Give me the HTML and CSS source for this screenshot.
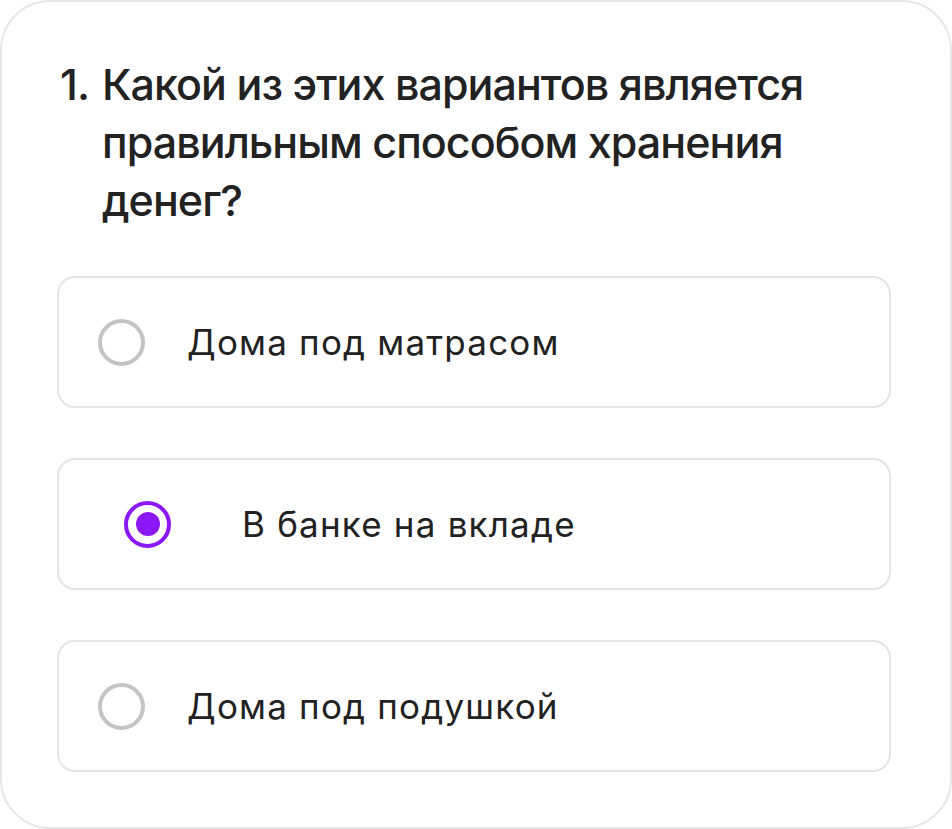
FILE: index.html
```html
<!DOCTYPE html>
<html lang="ru">
<head>
<meta charset="utf-8">
<title>Вопрос</title>
<link rel="stylesheet" href="styles.css">
</head>
<body>
<div class="card">
  <h1 class="question"><span class="num">1.</span><span class="qtext">Какой из этих вариантов является правильным способом хранения денег?</span></h1>
  <div class="options">
    <label class="option">
      <span class="radio"></span>
      <span class="label">Дома под матрасом</span>
    </label>
    <label class="option option--selected">
      <span class="radio radio--on"><span class="dot"></span></span>
      <span class="label">В банке на вкладе</span>
    </label>
    <label class="option">
      <span class="radio"></span>
      <span class="label">Дома под подушкой</span>
    </label>
  </div>
</div>
</body>
</html>
```
FILE: styles.css
```css
* { box-sizing: border-box; }
html, body { margin: 0; padding: 0; background: #fff; }
body {
  font-family: Inter, "Noto Sans", sans-serif;
  color: #222;
}
.card {
  width: 952px;
  height: 829px;
  border: 2px solid #e6e6e6;
  border-radius: 50px;
  padding: 53px 59px 0 55px;
  background: #fff;
}
.question {
  margin: 0 0 47px 0;
  display: grid;
  grid-template-columns: 45px 1fr;
  font-size: 43px;
  line-height: 58px;
  font-weight: 500;
  color: #222;
  letter-spacing: -0.95px;
}
.num { padding-left: 3px; }
.options {
  display: flex;
  flex-direction: column;
  gap: 50px;
}
.option {
  display: flex;
  align-items: center;
  height: 132px;
  border: 2px solid #e4e4e4;
  border-radius: 18px;
  padding-left: 39px;
  gap: 42px;
}
.option--selected {
  padding-left: 65px;
  gap: 71px;
}
.radio {
  flex: none;
  width: 47px;
  height: 47px;
  border-radius: 50%;
  border: 4px solid #c4c4c4;
  display: flex;
  align-items: center;
  justify-content: center;
}
.radio--on { border-color: #8b17f7; }
.dot {
  width: 24px;
  height: 24px;
  border-radius: 50%;
  background: #8b17f7;
}
.label {
  font-size: 35px;
  line-height: 44px;
  color: #222;
  letter-spacing: 1.2px;
}
```
